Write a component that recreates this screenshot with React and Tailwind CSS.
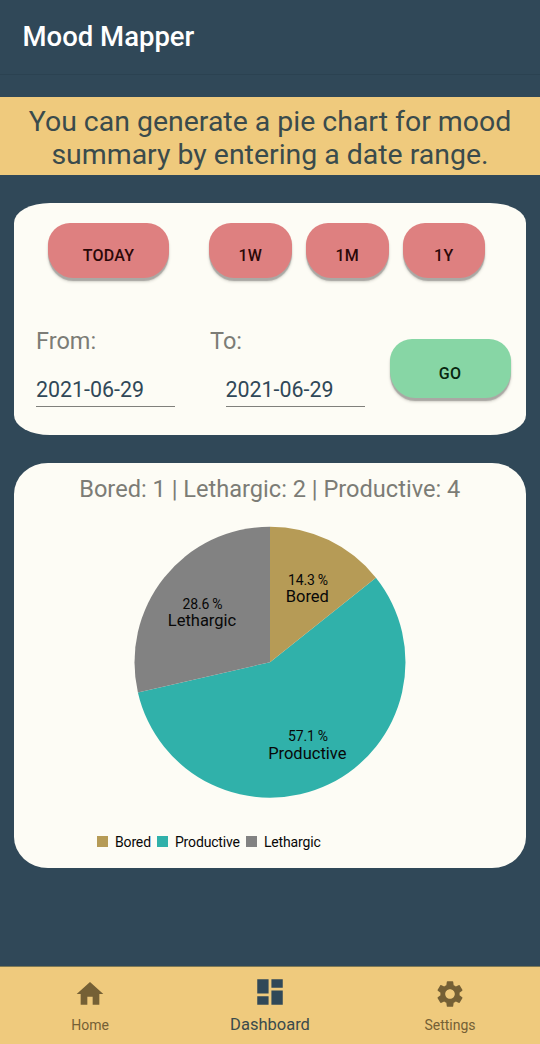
import { MdHome, MdDashboard, MdSettings } from "react-icons/md";

const COLORS = { Bored: "#b69b56", Productive: "#30b1aa", Lethargic: "#828282" };

function RangeButton({ children, className }) {
  return (
    <button
      className={`flex items-center justify-center rounded-[22px_22px_25px_25px/22px_22px_27px_27px] pt-[10px] text-[16px] leading-none font-medium tracking-[0.2px] shadow-[0_3px_1px_#aaa8a4,0_4px_3px_#d8d7cf] ${className}`}
    >
      {children}
    </button>
  );
}

function DateField({ label, value, className, fieldClass }) {
  return (
    <div className={className}>
      <div className="text-[23.5px] leading-[28px] text-[#7c7c76]">{label}</div>
      <div
        className={`mt-[18px] flex h-[34px] w-[139px] items-center border-b border-[#80807b] pt-[1px] text-[21.4px] leading-none text-[#304858] ${fieldClass}`}
      >
        {value}
      </div>
    </div>
  );
}

function PieChart() {
  return (
    <svg width="272" height="272" viewBox="134 526 272 272" className="mx-auto mt-[22px] block">
      <path d="M270 662.2L375.9 577.7A135.5 135.5 0 1 1 137.9 692.4Z" fill={COLORS.Productive} />
      <path d="M270 662.2V526.7A135.5 135.5 0 0 1 375.9 577.7Z" fill={COLORS.Bored} />
      <path d="M270 662.2L137.9 692.4A135.5 135.5 0 0 1 270 526.7Z" fill={COLORS.Lethargic} />
      <g textAnchor="middle" fill="#080808">
        <g fontSize="14" letterSpacing="-0.2">
          <text x="308" y="584.6">14.3 %</text>
          <text x="202.5" y="608.6">28.6 %</text>
          <text x="308" y="741">57.1 %</text>
        </g>
        <g fontSize="16.5">
          <text x="307.3" y="601.8">Bored</text>
          <text x="202" y="625.8">Lethargic</text>
          <text x="307.3" y="758.5">Productive</text>
        </g>
      </g>
    </svg>
  );
}

function LegendItem({ color, children, className }) {
  return (
    <div className={`flex items-start ${className}`}>
      <span className={`mt-[3px] mr-[7px] size-[11px] ${color}`} />
      <span>{children}</span>
    </div>
  );
}

export default function App() {
  return (
    <div className="flex h-[1044px] w-[540px] flex-col overflow-hidden bg-[#304858] font-['Roboto',sans-serif]">
      <header className="flex h-[75px] shrink-0 items-center border-b border-[#2b4251] pl-[22.5px] text-[27.5px] leading-none font-medium text-white">
        <h1>Mood Mapper</h1>
      </header>

      <p className="mt-[22px] h-[78px] shrink-0 bg-[#efca7d] pt-[8px] text-center text-[28.45px] leading-[33px] text-[#3a4b4c]">
        You can generate a pie chart for mood
        <br />
        summary by entering a date range.
      </p>

      <section className="mt-[28px] mr-[14.5px] ml-[14px] h-[232px] shrink-0 rounded-[36px/20px] bg-[#fdfcf5] pt-[20px]">
        <div className="flex pl-[34px]">
          <RangeButton className="h-[55px] w-[121px] bg-[#de8080] text-[#2b0808]">TODAY</RangeButton>
          <RangeButton className="ml-[40px] h-[55px] w-[82.5px] bg-[#de8080] text-[#2b0808]">1W</RangeButton>
          <RangeButton className="ml-[14.5px] h-[55px] w-[82.5px] bg-[#de8080] text-[#2b0808]">1M</RangeButton>
          <RangeButton className="ml-[14px] h-[55px] w-[82.5px] bg-[#de8080] text-[#2b0808]">1Y</RangeButton>
        </div>
        <div className="mt-[49px] flex pl-[22px]">
          <DateField label="From:" value="2021-06-29" className="w-[174px]" />
          <DateField label="To:" value="2021-06-29" className="w-[179.5px]" fieldClass="ml-[15.5px]" />
          <RangeButton className="mt-[12px] h-[59px] w-[121px] bg-[#87d6a5] text-[#07260f]">GO</RangeButton>
        </div>
      </section>

      <section className="mt-[28px] mr-[14.5px] ml-[14px] h-[405px] shrink-0 rounded-[34px/31px] bg-[#fdfcf5] pt-[12px]">
        <h2 className="text-center text-[23.6px] leading-[29px] text-[#7c7c76]">
          Bored: 1 | Lethargic: 2 | Productive: 4
        </h2>
        <PieChart />
        <div className="mt-[35px] flex pl-[83px] text-[14px] leading-[18px] tracking-[-0.15px] text-[#080808]">
          <LegendItem color="bg-[#b69b56]">Bored</LegendItem>
          <LegendItem color="bg-[#30b1aa]" className="ml-[6px]">Productive</LegendItem>
          <LegendItem color="bg-[#828282]" className="ml-[6px]">Lethargic</LegendItem>
        </div>
      </section>

      <nav className="mt-auto grid h-[78px] shrink-0 grid-cols-3 border-t border-[#7d7955] bg-[#efca7d] text-[#756035]">
        <a className="flex flex-col items-center pt-[11px] text-[14px] leading-[16px]">
          <MdHome size={32} />
          <span className="mt-[7px]">Home</span>
        </a>
        <a className="flex flex-col items-center pt-[8px] text-[16.5px] leading-[18px] text-[#3a4b4c]">
          <MdDashboard size={34} color="#304858" />
          <span className="mt-[7px]">Dashboard</span>
        </a>
        <a className="flex flex-col items-center pt-[11px] text-[14px] leading-[16px]">
          <MdSettings size={32} />
          <span className="mt-[7px]">Settings</span>
        </a>
      </nav>
    </div>
  );
}
